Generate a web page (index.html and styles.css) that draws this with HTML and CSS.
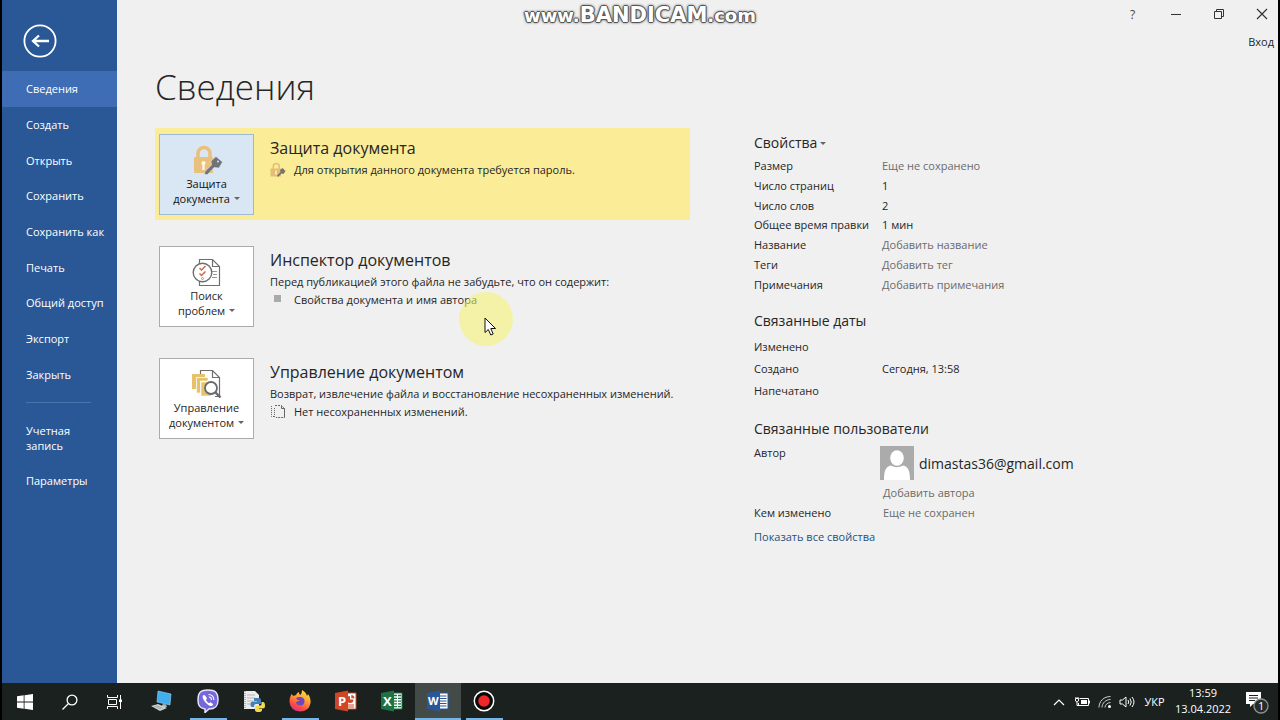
FILE: index.html
```html
<!DOCTYPE html>
<html lang="ru">
<head>
<meta charset="utf-8">
<title>Сведения</title>
<link rel="stylesheet" href="styles.css">
</head>
<body>
<div class="screen">
  <div class="window">
    <aside class="sidebar">
      <button class="back" type="button" aria-label="Назад">
        <svg width="34" height="34" viewBox="0 0 34 34" fill="none" stroke="#fff"><circle cx="17" cy="17" r="15.6" stroke-width="1.8"/><path d="M26 17H10.500M16 11.500L10 17L16 22.500" stroke-width="2.300"/></svg>
      </button>
      <nav class="menu">
        <a class="menu-item active" href="#">Сведения</a>
        <a class="menu-item" href="#">Создать</a>
        <a class="menu-item" href="#">Открыть</a>
        <a class="menu-item" href="#">Сохранить</a>
        <a class="menu-item" href="#">Сохранить как</a>
        <a class="menu-item" href="#">Печать</a>
        <a class="menu-item" href="#">Общий доступ</a>
        <a class="menu-item" href="#">Экспорт</a>
        <a class="menu-item" href="#">Закрыть</a>
      </nav>
      <hr class="rule">
      <nav class="menu-bottom">
        <a class="menu-item" href="#">Учетная<br>запись</a>
        <a class="menu-item" href="#">Параметры</a>
      </nav>
    </aside>

    <main class="page">
      <header class="titlebar">
        <div class="controls">
          <button type="button" class="help" aria-label="Справка">?</button>
          <button type="button" aria-label="Свернуть"><svg width="12" height="12" viewBox="0 0 12 12"><path d="M1 6.500H11" stroke="#333"/></svg></button>
          <button type="button" aria-label="Восстановить"><svg width="12" height="12" viewBox="0 0 12 12" fill="none" stroke="#333"><path d="M1.500 3.500H8.500V10.500H1.500ZM3.500 3V1.500H10.500V8.500H9"/></svg></button>
          <button type="button" aria-label="Закрыть"><svg width="12" height="12" viewBox="0 0 12 12"><path d="M1 1L11 11M11 1L1 11" stroke="#333" stroke-width="1.200"/></svg></button>
        </div>
        <a class="signin" href="#">Вход</a>
      </header>

      <h1 class="title">Сведения</h1>

      <div class="columns">
        <div class="cards">
          <section class="card highlighted">
            <button class="tile" type="button">
              <svg width="32" height="32" viewBox="0 0 32 32"><path d="M7 14V9.500a6 6 0 0 1 12 0V14" fill="none" stroke="#eac07d" stroke-width="3.600"/><rect x="3" y="13" width="19" height="16" rx="1" fill="#eac07d"/><path d="M12.500 17a2.200 2.200 0 0 1 1.200 4V26H11.300V21A2.200 2.200 0 0 1 12.500 17Z" fill="#fff6e6"/><path d="M14 27.500L20.500 21L20 17L25 12.500L31.500 18L28 24L23 23.500L16.500 30.500L13.500 30.500Z" fill="#6f7479" stroke="#dae6f3" stroke-width=".6"/><circle cx="27" cy="17.500" r="1" fill="#dae6f3"/></svg>
              <span>Защита</span><span>документа <i class="arrow"></i></span>
            </button>
            <div class="info">
              <h2>Защита документа</h2>
              <p class="line"><span class="mark"><svg width="16" height="16" viewBox="0 0 32 32"><path d="M6.500 14V9a6 6 0 0 1 12 0V14" fill="none" stroke="#e6bd73" stroke-width="3"/><rect x="1" y="13" width="21" height="16" fill="#e6bd73"/><path d="M12 17V25" stroke="#fff3cf" stroke-width="3"/><path d="M14 27L21 20L20 16L25 12L31 18L27 24L23 23L16 30Z" fill="#77746a"/></svg></span>Для открытия данного документа требуется пароль.</p>
            </div>
          </section>
          <section class="card">
            <button class="tile" type="button">
              <svg width="32" height="32" viewBox="0 0 32 32" fill="none" stroke="#6e6e6e"><path d="M8.500 8V3.500H21.500L28.500 10.500V29.500H8.500V26M21.500 3.500V10.500H28.500" stroke-width="1.200"/><path d="M21 15.500H26M22 18.500H26M21 21.500H26" stroke="#999"/><circle cx="11.500" cy="16.500" r="9.300" fill="#fff" stroke-width="1.400"/><path d="M8.500 12L10.500 14L14.500 10M8.500 17.500L10.500 19.500L14.500 15.500" stroke="#cf694b" stroke-width="1.500"/><circle cx="11.500" cy="22.500" r="1" stroke="#999"/></svg>
              <span>Поиск</span><span>проблем <i class="arrow"></i></span>
            </button>
            <div class="info">
              <h2>Инспектор документов</h2>
              <p class="line">Перед публикацией этого файла не забудьте, что он содержит:</p>
              <p class="line"><span class="mark"><i class="bullet"></i></span>Свойства документа и имя автора</p>
            </div>
          </section>
          <section class="card">
            <button class="tile" type="button">
              <svg width="32" height="32" viewBox="0 0 32 32" fill="none"><path d="M9.500 9V2.500H21.500L28.500 9.500V28.500H24M21.500 2.500V9.500H28.500" fill="#fff" stroke="#6e6e6e" stroke-width="1.200"/><path d="M1 6H14V9H5V21H1Z" fill="#e6c36b"/><path d="M5.500 9.500H17V13H9.500V25H5.500Z" fill="#e6c36b" stroke="#fff" stroke-width=".6"/><path d="M10 14H20V28H10Z" fill="#e6c36b" stroke="#fff" stroke-width=".6"/><circle cx="20" cy="20" r="6" fill="#fff" stroke="#666b70" stroke-width="1.800"/><path d="M24.500 24.500L29.500 29.500" stroke="#666b70" stroke-width="2.400"/></svg>
              <span>Управление</span><span>документом <i class="arrow"></i></span>
            </button>
            <div class="info">
              <h2>Управление документом</h2>
              <p class="line">Возврат, извлечение файла и восстановление несохраненных изменений.</p>
              <p class="line"><span class="mark"><svg width="16" height="16" viewBox="0 0 16 16" fill="none" stroke="#666"><path d="M1.500 2V12.500H4M4.500 4V14" stroke-dasharray="1 1"/><path d="M5 1.500H11.500L14.500 4.500V13.500H6" stroke-dasharray="2 1"/><path d="M11.500 2V4.500H14.500V13.500"/></svg></span>Нет несохраненных изменений.</p>
            </div>
          </section>
        </div>

        <div class="properties">
          <h3><button class="plain" type="button">Свойства<i class="arrow"></i></button></h3>
          <dl class="facts compact">
            <dt>Размер</dt><dd class="muted">Еще не сохранено</dd>
            <dt>Число страниц</dt><dd>1</dd>
            <dt>Число слов</dt><dd>2</dd>
            <dt>Общее время правки</dt><dd>1 мин</dd>
            <dt>Название</dt><dd><button class="plain muted" type="button">Добавить название</button></dd>
            <dt>Теги</dt><dd><button class="plain muted" type="button">Добавить тег</button></dd>
            <dt>Примечания</dt><dd><button class="plain muted" type="button">Добавить примечания</button></dd>
          </dl>
          <h3>Связанные даты</h3>
          <dl class="facts dates">
            <dt>Изменено</dt><dd></dd>
            <dt>Создано</dt><dd>Сегодня, 13:58</dd>
            <dt>Напечатано</dt><dd></dd>
          </dl>
          <h3>Связанные пользователи</h3>
          <dl class="facts people">
            <dt>Автор</dt>
            <dd>
              <div class="person"><svg width="34" height="34" viewBox="0 0 34 34"><rect width="34" height="34" fill="#ababab"/><ellipse cx="17" cy="12" rx="6.800" ry="7.800" fill="#fff"/><path d="M4 34C4 24 6 20.500 11 19.500Q17 23 23 19.500C28 20.500 30 24 30 34Z" fill="#fff"/></svg><span>dimastas36@gmail.com</span></div>
              <button class="plain muted add" type="button">Добавить автора</button>
            </dd>
            <dt>Кем изменено</dt><dd class="muted indent">Еще не сохранен</dd>
          </dl>
          <a class="all" href="#">Показать все свойства</a>
        </div>
      </div>
    </main>
  </div>

  <footer class="taskbar">
    <div class="system">
      <button type="button" aria-label="Пуск"><svg width="16" height="16" viewBox="0 0 16 16" fill="#fff"><path d="M0 2.300L6.700 1.300V7.600H0ZM7.500 1.200L16 0V7.600H7.500ZM0 8.400H6.700V14.700L0 13.700ZM7.500 8.400H16V16L7.500 14.800Z"/></svg></button>
      <button type="button" aria-label="Поиск"><svg width="16" height="16" viewBox="0 0 16 16" fill="none" stroke="#fff" stroke-width="1.300"><circle cx="10" cy="6" r="4.900"/><path d="M6.500 9.500L.5 15.500"/></svg></button>
      <button type="button" aria-label="Представление задач"><svg width="16" height="16" viewBox="0 0 16 16" fill="none" stroke="#fff"><path d="M.5 1V3.500H10.500V1M1.500 5.500H9.500V10.500H1.500ZM.5 15V12.500H10.500V15M13.500 1V15"/><path d="M12 5.500H15V8H12Z" fill="#fff" stroke="none"/></svg></button>
    </div>
    <div class="apps">
      <button type="button" aria-label="Компьютер"><svg width="24" height="22" viewBox="0 0 24 22"><path d="M8 1L21 4L20 15L7 12Z" fill="#42aef0" stroke="#9bd5f7" stroke-width=".6"/><path d="M13 14L16 14.500L17 17H11Z" fill="#a9b8b8"/><path d="M1 16L8 14L17 18L10 21Z" fill="#cbd6d2"/><path d="M4 16.300L11 19M6 15.500L13 18.300" stroke="#899994" stroke-width=".7"/></svg></button>
      <button class="running" type="button" aria-label="Viber"><svg width="24" height="24" viewBox="0 0 24 24"><path d="M12 1C19 1 22 3 22 11C22 18 19 20 13 20L9 23.500V20C4 19 2 17 2 11C2 3 5 1 12 1Z" fill="#7767dc" stroke="#e8e4fc" stroke-width="1.500"/><path d="M7.500 6C6 7 6.500 9 8 11.500C10 14.500 12 16 14.500 17C16 17.500 17.500 15.500 17 15L14.500 13.200L13 14.200C11.500 13.500 10.500 12.300 10 11L11 9.500L9.200 6.500Z" fill="#fff"/><path d="M12.500 5.500C16 5.500 18 8 17.800 11M12.800 8C14.500 8 15.500 9.500 15.500 11" fill="none" stroke="#fff" stroke-width="1.100"/></svg></button>
      <button type="button" aria-label="Python"><svg width="24" height="24" viewBox="0 0 24 24"><path d="M2 2H13L17 6V20H2Z" fill="#ececec"/><path d="M3 2V20" stroke="#777" stroke-dasharray="1 1"/><path d="M5 6H13M5 9H13M5 12H11M5 15H10" stroke="#b5b5b5"/><path d="M12 9H17Q19 9 19 11V15H14Q12 15 12 18H10Q8.500 18 8.500 15Q8.500 12.500 11 12.500H15V12H12Z" fill="#4380b5"/><path d="M19.500 13H21Q23 13 23 17Q23 19.500 20.500 19.500H17V20H20V21Q20 23 16.500 23Q13 23 13 21V18Q13 16.500 15 16.500H18Q19.500 16.500 19.500 15Z" fill="#f4d84f"/></svg></button>
      <button class="running" type="button" aria-label="Firefox"><svg width="24" height="24" viewBox="0 0 24 24"><defs><linearGradient id="fox" x1=".8" y1="0" x2=".3" y2="1"><stop offset="0" stop-color="#ffe44a"/><stop offset=".45" stop-color="#ff9830"/><stop offset=".75" stop-color="#fa4f43"/><stop offset="1" stop-color="#df2d83"/></linearGradient></defs><path d="M3.500 5L5.500 7L8 6Q9 3.500 11 3Q10.500 5 12.500 6Q14 4 14 1Q18 3 19 7L20 5Q23 9 22.500 14Q21 22.500 12 22.500Q2.500 22 1.500 13Q1.500 8 3.500 5Z" fill="url(#fox)"/><path d="M8 9Q10 7.500 13 8Q17 9 16.500 13Q15.500 17 12 16.500Q8.500 16 8 13L12 11.500Q9 11.500 8 9Z" fill="#7146bd"/></svg></button>
      <button type="button" aria-label="PowerPoint"><svg width="22" height="22" viewBox="0 0 22 22"><path d="M11 3H21V19H11Z" fill="#fff" stroke="#cf4a2c"/><path d="M15 6a3.500 3.500 0 1 0 3.500 3.500H15ZM16.300 5a3.500 3.500 0 0 1 3.200 3.200H16.300ZM13 14.500H19V15.500H13ZM13 16.500H19V17.500H13Z" fill="#cf4a2c"/><path d="M0 3L13 .5V21.500L0 19Z" fill="#cf4526"/><text x="3" y="15.500" class="glyph">P</text></svg></button>
      <button type="button" aria-label="Excel"><svg width="22" height="22" viewBox="0 0 22 22"><path d="M11 3H21V19H11Z" fill="#fff" stroke="#217346"/><path d="M13 5.500H16M17 5.500H20M13 8.300H16M17 8.300H20M13 11.100H16M17 11.100H20M13 13.900H16M17 13.900H20M13 16.700H16M17 16.700H20" stroke="#217346" stroke-width="1.300"/><path d="M0 3L13 .5V21.500L0 19Z" fill="#1f7244"/><text x="2" y="15.500" class="glyph">X</text></svg></button>
      <button class="running current" type="button" aria-label="Word"><svg width="22" height="22" viewBox="0 0 22 22"><path d="M11 3H21V19H11Z" fill="#fff" stroke="#2b579a"/><path d="M13 6H19.500M13 8.500H19.500M13 11H19.500M13 13.500H19.500M13 16H19.500" stroke="#2b579a" stroke-width="1.200"/><path d="M0 3L13 .5V21.500L0 19Z" fill="#2a569a"/><text x="1" y="15" class="glyph wide">W</text></svg></button>
      <button class="running" type="button" aria-label="Bandicam"><svg width="22" height="22" viewBox="0 0 22 22"><circle cx="11" cy="11" r="9.700" fill="#080808" stroke="#fff" stroke-width="1.500"/><circle cx="11" cy="11" r="5.800" fill="#ee2828"/></svg></button>
    </div>
    <div class="tray">
      <button type="button" aria-label="Скрытые значки"><svg width="12" height="12" viewBox="0 0 12 12"><path d="M1 9L6 4L11 9" fill="none" stroke="#fff" stroke-width="1.200"/></svg></button>
      <button type="button" aria-label="Батарея"><svg width="16" height="16" viewBox="0 0 16 16" fill="none" stroke="#fff"><path d="M5.500 4.500H14.500V11.500H4.500V9M15.500 6.500V9.500"/><path d="M7 6H13V10H7Z" fill="#fff" stroke="none"/><path d="M1.500 4.500H4.500V7L3 8L1.500 7ZM2 3V4.500M4 3V4.500M3 8V11.500H5"/></svg></button>
      <button type="button" aria-label="Сеть"><svg width="14" height="14" viewBox="0 0 14 14" fill="none" stroke="#ccc"><path d="M1 12.500C1 6 6 1.500 12.500 1.500M4 12.500C4 8 8 4.500 12.500 4.500M7 12.500C7 10 9.500 7.500 12.500 7.500"/><circle cx="11.500" cy="11.500" r="1.500" fill="#fff" stroke="none"/></svg></button>
      <button type="button" aria-label="Громкость"><svg width="17" height="14" viewBox="0 0 17 14" fill="none" stroke="#fff"><path d="M1 5H3.500L7 2V12L3.500 9H1ZM9 5Q10.500 7 9 9M11 3.500Q13.500 7 11 10.500M13 2Q17 7 13 12"/></svg></button>
      <button class="lang" type="button">УКР</button>
      <button class="clock" type="button"><span>13:59</span><span>13.04.2022</span></button>
      <button class="notice" type="button" aria-label="Уведомления"><svg width="24" height="24" viewBox="0 0 24 24"><path d="M1 2H16V14H8L5 17V14H1Z" fill="#fff"/><path d="M4 5.500H13M4 8H13M4 10.500H10" stroke="#1a211f"/><circle cx="16" cy="16" r="7" fill="#252b2a" stroke="#8d9290" stroke-width="1.300"/><text x="13" y="20" class="count">1</text></svg></button>
    </div>
  </footer>

  <div class="watermark">www.<b>BANDICAM</b>.com</div>
  <div class="pointer"><svg width="14" height="20" viewBox="0 0 14 20"><path d="M1 1V15.500L4.300 12.500L6.800 18L9.200 17L6.800 11.500H11.500Z" fill="#fff" stroke="#111"/></svg></div>
</div>
</body>
</html>
```
FILE: styles.css
```css
* { box-sizing: border-box; }

body {
  margin: 0;
  font: 11px/15px "Open Sans", "Noto Sans", sans-serif;
  color: #262626;
}

button {
  margin: 0;
  padding: 0;
  border: 0;
  background: none;
  color: inherit;
  font: inherit;
}

a { color: inherit; text-decoration: none; }
h1, h2, h3, p, dl, dd { margin: 0; font-weight: 400; }
svg { display: block; flex: none; }

.screen {
  position: relative;
  display: flex;
  flex-direction: column;
  min-height: 100vh;
  padding: 0 2px;
  background: #000;
  overflow: hidden;
}

.window { display: flex; flex: 1; background: #f0f0f0; }

.sidebar {
  flex: none;
  width: 115px;
  padding-top: 24px;
  background: #2a5897;
  color: #fff;
}

.back { display: block; margin: 0 0 13px 21px; }

.menu { display: grid; grid-auto-rows: 1fr; min-height: 321px; }

.menu-item {
  display: flex;
  align-items: center;
  padding-left: 24px;
  white-space: nowrap;
}

.menu-item.active { background: #3e6db5; }

.rule {
  height: 1px;
  margin: 10px 26px 20px 24px;
  border: 0;
  background: #4a74ae;
}

.menu-bottom { display: grid; gap: 20px; }

.page { flex: 1; min-width: 0; }

.titlebar {
  display: flex;
  flex-direction: column;
  align-items: flex-end;
  gap: 6px;
}

.controls { display: flex; }

.controls button {
  display: grid;
  place-items: center;
  width: 43px;
  height: 28px;
}

.controls button:last-child { width: 32px; margin-left: 6px; }
.help { font-size: 12px; color: #444; }
.signin { padding-right: 4px; }

.title {
  margin: 12px 0 16px 38px;
  font-size: 35px;
  line-height: 51px;
  font-weight: 300;
}

.columns { display: flex; gap: 64px; padding-left: 38px; }

.cards {
  display: flex;
  flex: 0 1 535px;
  flex-direction: column;
  gap: 20px;
}

.card { display: flex; gap: 16px; min-height: 92px; padding: 6px 4px 5px; }
.card.highlighted { background: #fbed97; }

.tile {
  display: flex;
  flex: none;
  flex-direction: column;
  align-items: center;
  width: 95px;
  height: 81px;
  padding-top: 9px;
  border: 1px solid #ababab;
  background: #fff;
}

.highlighted .tile { border-color: #9dbad0; background: #d9e6f4; color: #111; }

.arrow {
  display: inline-block;
  margin-left: 1px;
  border: 3px solid transparent;
  border-top-color: #666;
  border-bottom: 0;
  vertical-align: 3px;
}

.properties .arrow { margin-left: 3px; }

.info { padding-top: 3px; }
.info h2 { margin-bottom: 3px; font-size: 16px; line-height: 22px; }
.line { display: flex; margin-bottom: 3px; }
.mark { flex: none; width: 24px; }
.bullet { display: block; width: 7px; height: 7px; margin: 3px 4px; background: #aaa; }

.properties { flex: 1; padding-top: 5px; }
.properties h3 { font-size: 14px; line-height: 20px; }
.plain { display: inline-block; }
.muted { color: #6b6b6b; }

.facts {
  display: grid;
  grid-template-columns: 128px 1fr;
  align-items: center;
}

.compact { grid-auto-rows: 1fr; min-height: 138px; margin: 3px 0 17px; }
.dates { grid-auto-rows: 22px; margin: 4px 0 18px; }
.people { align-items: start; margin-top: 6px; }
.person { display: flex; align-items: center; gap: 5px; margin: 1px 0 0 -2px; font-size: 14px; }
.add, .indent { margin-left: 1px; }
.add { margin-top: 5px; margin-bottom: 5px; }
.all { display: inline-block; margin-top: 9px; color: #24527f; }

.taskbar {
  display: flex;
  height: 37px;
  background: #1a211f;
  color: #fff;
}

.taskbar button { display: grid; place-items: center; }
.system, .apps, .tray { display: flex; }
.system button { width: 45px; }
.apps { margin-left: 2px; }
.apps button { width: 46px; border-bottom: 2px solid transparent; }
.running { background: linear-gradient(#76b5e8, #76b5e8) center bottom / 37px 2px no-repeat border-box; }
.apps .current { border-bottom-color: #76b5e8; background: #434b49; }
.tray { margin-left: auto; }
.tray button { width: 23px; }
.tray .lang { width: 31px; }
.tray .clock { width: 66px; padding: 1px 0 3px; }
.tray .notice { width: 42px; }
.glyph { fill: #fff; font-size: 13px; font-weight: 700; }
.wide { font-size: 11px; }
.count { fill: #fff; font-size: 11px; }

.watermark {
  position: absolute;
  top: 3px;
  left: 50%;
  transform: translateX(-50%);
  color: #fff;
  font: 700 18px/24px "DejaVu Sans", sans-serif;
  text-shadow: 1px 0 #555, -1px 0 #555, 0 1px #555, 0 -1px #555, 0 0 3px #333, 0 0 3px #555;
  white-space: nowrap;
}

.watermark b { font-size: 21px; }

.pointer {
  position: absolute;
  top: 292px;
  left: 459px;
  width: 54px;
  height: 54px;
  padding: 25px 0 0 25px;
  border-radius: 50%;
  background: linear-gradient(rgba(246, 243, 105, .55), rgba(246, 243, 105, .55));
}
```
